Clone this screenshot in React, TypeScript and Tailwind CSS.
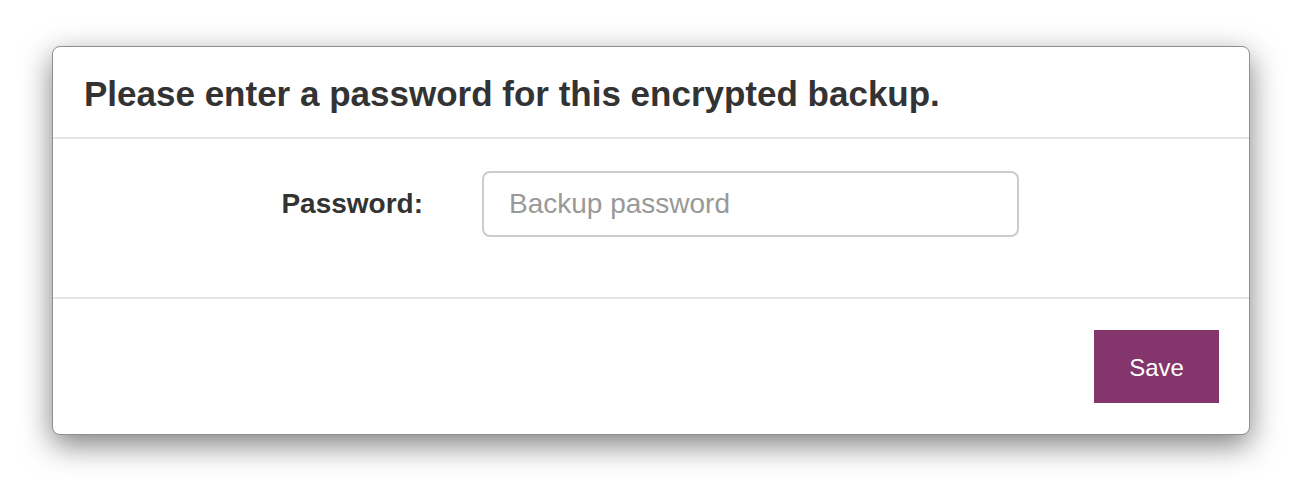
import React from "react";

export default function App() {
  return (
    <div className="min-h-[502px] w-[1308px] bg-white pt-[46px] pl-[52px] font-['Liberation_Sans',Arial,sans-serif] text-[#333]">
      <div className="w-[1198px] rounded-[8px] border border-[#8f8f8f] bg-white shadow-[0_10px_30px_rgba(0,0,0,0.5)]">
        {/* header */}
        <div className="flex h-[92px] items-center border-b-2 border-[#e5e5e5] px-[31px] pt-[3px]">
          <h4 className="text-[35px] font-bold leading-none">
            Please enter a password for this encrypted backup.
          </h4>
        </div>

        {/* body */}
        <div className="flex h-[160px] items-start border-b-2 border-[#e5e5e5] pt-[32px]">
          <label className="flex h-[66px] w-[370px] items-center justify-end text-[28px] font-bold">
            Password:
          </label>
          <input
            type="password"
            placeholder="Backup password"
            className="ml-[59px] h-[66px] w-[537px] rounded-[8px] border-2 border-[#cccccc] px-[25px] text-[28px] text-[#555] outline-none placeholder:text-[#999]"
          />
        </div>

        {/* footer */}
        <div className="flex h-[135px] items-start justify-end pt-[31px] pr-[30px]">
          <button className="h-[73px] w-[125px] bg-[#84366c] pt-[2px] text-[24px] text-white">
            Save
          </button>
        </div>
      </div>
    </div>
  );
}
